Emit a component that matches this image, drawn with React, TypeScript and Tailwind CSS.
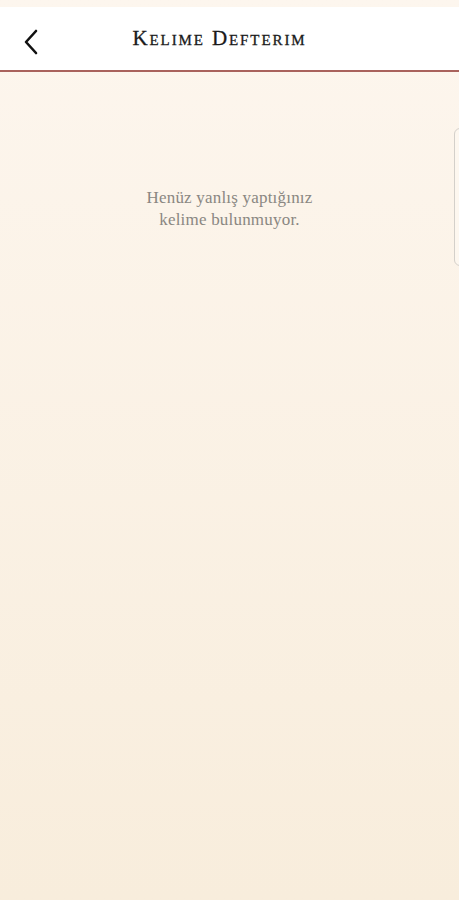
import React from 'react';

const serif = { fontFamily: '"Liberation Serif", "DejaVu Serif", serif' };

const App: React.FC = () => {
  return (
    <div className="relative min-h-[900px] h-[900px] overflow-hidden bg-gradient-to-b from-[#fdf6ee] to-[#f8eddc]" style={serif}>
      {/* Header */}
      <div className="pt-[7px]">
        <div className="relative flex h-[65px] items-center justify-center bg-white border-b-2 border-[#a9625c]">
          <button className="absolute left-[18px] top-[17px] p-1">
            <svg width="18" height="28" viewBox="0 0 18 28" fill="none">
              <path d="M14 3 L4 14 L14 25" stroke="#111" strokeWidth="2.6" strokeLinecap="round" strokeLinejoin="round" />
            </svg>
          </button>
          <h1 className="pr-[20px] text-[21px] font-normal tracking-[1.9px] text-[#1a1a1a] [font-variant:small-caps] [-webkit-text-stroke:0.3px_#1a1a1a]">
            Kelime Defterim
          </h1>
        </div>
      </div>

      {/* Empty state */}
      <div className="flex justify-center pt-[115px]">
        <p className="text-center text-[17px] leading-[22px] tracking-[0.2px] text-[#8a8782]">
          Henüz yanlış yaptığınız
          <br />
          kelime bulunmuyor.
        </p>
      </div>

      {/* Offscreen side panel edge */}
      <div className="absolute left-[454px] top-[128px] h-[138px] w-[40px] rounded-l-[6px] border border-[#d4d0ca] bg-[#fdf7ef]" />
    </div>
  );
};

export default App;
